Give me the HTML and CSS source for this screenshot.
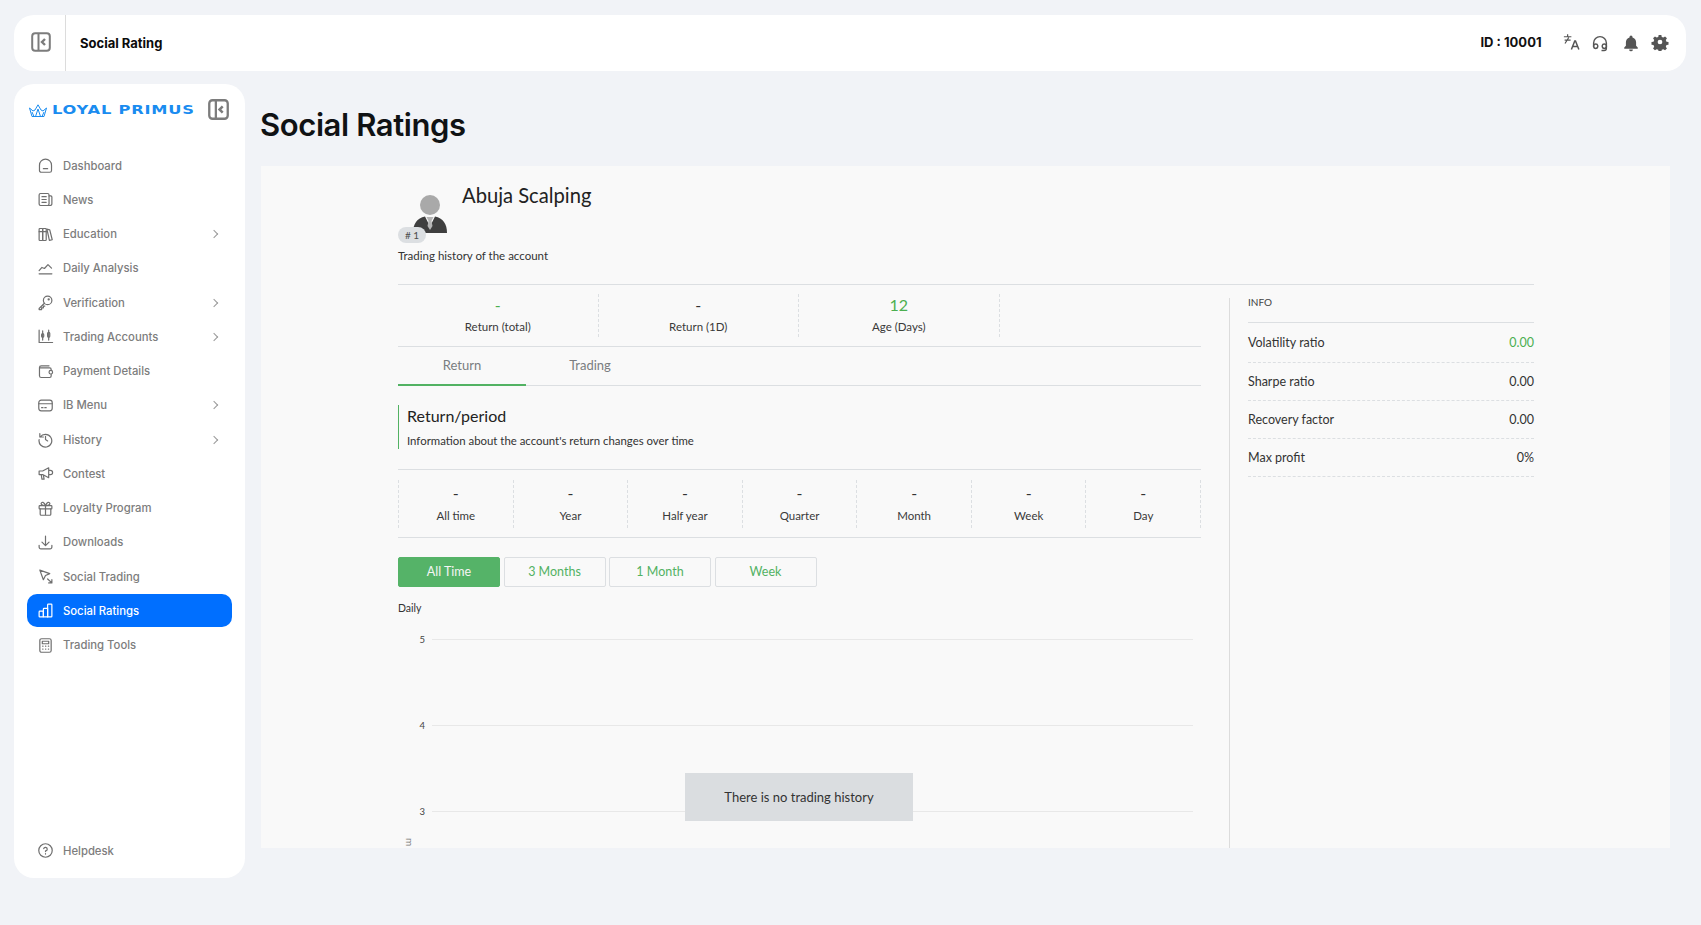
FILE: index.html
```html
<!DOCTYPE html>
<html lang="en">
<head>
<meta charset="utf-8">
<title>Social Ratings</title>
<link rel="stylesheet" href="styles.css">
</head>
<body>
<div class="app">
  <header class="topbar">
    <div class="topbar-toggle">
      <svg class="toggle-icon" viewBox="0 0 20 20"><rect x="1.200" y="1.200" width="17.600" height="17.600" rx="3"/><path d="M7.500 1v18"/><path class="thick" d="M14 7l-3 3 3 3"/></svg>
    </div>
    <div class="topbar-title">Social Rating</div>
    <div class="topbar-id">ID : 10001</div>
    <div class="topbar-icons">
      <svg class="ti" viewBox="0 0 24 24"><path d="M2.500 5h10M7.500 1.500v3.500M3.500 9.500h8M9 6l-5 8"/><path class="heavy" d="M12.500 22l4.500-11.500h1L22.500 22M14.200 18h6.600"/></svg>
      <svg class="ti ti-head" viewBox="0 0 24 24"><path d="M3.500 17v-5a8.500 8.500 0 0 1 17 0v5"/><path d="M3.500 15.500a2.800 2.800 0 0 1 5.500 0v1.500a2.800 2.800 0 0 1-5.500 0zM20.500 15.500a2.800 2.800 0 0 0-5.500 0v1.500a2.800 2.800 0 0 0 5.500 0z"/><path d="M20.500 17v2a3 3 0 0 1-3 3h-3.500"/></svg>
      <svg class="ti ti-bell" viewBox="0 0 24 24"><path class="solid" d="M12 2a2 2 0 0 1 2 2v.500c3 .9 4.800 3.500 4.800 6.500v4.500L21 18v1.500H3V18l2.200-2.500V11c0-3 1.800-5.600 4.800-6.500V4a2 2 0 0 1 2-2zM9.500 20.500h5a2.500 2.500 0 0 1-5 0z"/></svg>
      <svg class="ti ti-gear" viewBox="0 0 24 24"><path class="solid" fill-rule="evenodd" d="M10 1.500h4l.6 3 2.300 1 2.600-1.700 2.800 2.800-1.700 2.600 1 2.300 3 .5v4l-3 .6-1 2.300 1.700 2.600-2.800 2.800-2.600-1.700-2.300 1-.6 3h-4l-.6-3-2.300-1-2.600 1.700-2.800-2.800 1.700-2.600-1-2.300-3-.6v-4l3-.5 1-2.300L1.700 6.600l2.800-2.800 2.600 1.700 2.300-1zM12 8.500a3.500 3.500 0 1 0 0 7 3.500 3.500 0 0 0 0-7z" transform="translate(1.200 1.200) scale(.9)"/></svg>
    </div>
  </header>

  <div class="layout">
    <aside class="sidebar">
      <div class="brand">
        <svg class="crown" viewBox="0 0 18 13"><path d="M.5 4l2.500 8.500h12L17.500 4l-3.500 3-2-1L9 .8 6 6 4 7zM9 5l-2.500 7.500h5zM3 8l2 4.500M15 8l-2 4.500"/></svg>
        <span class="brand-name">LOYAL PRIMUS</span>
        <svg class="toggle-icon side-toggle" viewBox="0 0 20 20"><rect x="1.200" y="1.200" width="17.600" height="17.600" rx="3"/><path d="M7.500 1v18"/><path class="thick" d="M14 7l-3 3 3 3"/></svg>
      </div>
      <nav class="nav">
        <a class="nav-item"><svg viewBox="0 0 24 24"><path d="M3.500 11.500a8.500 8.500 0 0 1 17 0V19a2.500 2.500 0 0 1-2.500 2.500H6A2.500 2.500 0 0 1 3.500 19zM9 16.500h6"/></svg><span>Dashboard</span></a>
        <a class="nav-item"><svg viewBox="0 0 24 24"><rect x="3" y="3.500" width="14" height="17" rx="2"/><path d="M17 7h2.500A1.500 1.500 0 0 1 21 8.500V18a2.500 2.500 0 0 1-2.500 2.500H15M7 8h6M7 12h6M7 16h6"/></svg><span>News</span></a>
        <a class="nav-item"><svg viewBox="0 0 24 24"><rect x="3" y="3.500" width="5" height="17" rx="1"/><rect x="8" y="3.500" width="5" height="17" rx="1"/><path d="M3 8h10M14 4.500l4 .9 3.500 14-4 1z"/></svg><span>Education</span><i class="chev"></i></a>
        <a class="nav-item"><svg viewBox="0 0 24 24"><path d="M3 15l4-4.500 3.500 1.500 5-5.500 5 5M3 19.500h18"/></svg><span>Daily Analysis</span></a>
        <a class="nav-item"><svg viewBox="0 0 24 24"><circle cx="15" cy="9" r="6"/><path d="M10.500 13L3 20.500V22h3.500v-2.500H9V17h2"/><circle cx="16.500" cy="7.500" r=".8"/></svg><span>Verification</span><i class="chev"></i></a>
        <a class="nav-item"><svg viewBox="0 0 24 24"><path d="M3 3v17.500h19M8 4v13M16.500 3v14"/><rect x="6.500" y="8" width="3" height="5" rx="1.500"/><rect x="15" y="6" width="3" height="7" rx="1.500"/></svg><span>Trading Accounts</span><i class="chev"></i></a>
        <a class="nav-item"><svg viewBox="0 0 24 24"><path d="M17 4H6a2.500 2.500 0 0 0-2.500 2.500V18A2.500 2.500 0 0 0 6 20.500h12a2 2 0 0 0 2-2V16M3.500 7H18a2 2 0 0 1 2 2v1.500"/><circle cx="19.500" cy="13" r="2.500"/></svg><span>Payment Details</span></a>
        <a class="nav-item"><svg viewBox="0 0 24 24"><rect x="2.500" y="4.500" width="19" height="15" rx="3.500"/><path d="M2.500 9.500h19M6.500 15h2M11 15h2"/></svg><span>IB Menu</span><i class="chev"></i></a>
        <a class="nav-item"><svg viewBox="0 0 24 24"><path d="M4.500 8.500A9 9 0 1 1 3 12M4 3.500v5h5M12 7.500V12l3 2"/></svg><span>History</span><i class="chev"></i></a>
        <a class="nav-item"><svg viewBox="0 0 24 24"><path d="M3 8.500h5L16.500 4v14L8 13.500H3zM16.500 7.500h2.500a3 3 0 0 1 0 6h-2.500M6 13.500l1 6.500h3l-1-6"/></svg><span>Contest</span></a>
        <a class="nav-item"><svg viewBox="0 0 24 24"><rect x="3" y="8" width="18" height="4.500" rx="1"/><path d="M4.500 12.500V20a1.500 1.500 0 0 0 1.500 1.500h12a1.500 1.500 0 0 0 1.500-1.500v-7.500M12 8v13.500M12 8c-5.500 0-6.500-2-6-3.500C6.700 2.500 10 2.500 12 8zM12 8c5.500 0 6.500-2 6-3.500-.7-2-4-2-6 3.500z"/></svg><span>Loyalty Program</span></a>
        <a class="nav-item"><svg viewBox="0 0 24 24"><path d="M12 3v13M7 11.500l5 5 5-5M3 16v2.500A2.500 2.500 0 0 0 5.500 21h13a2.500 2.500 0 0 0 2.500-2.500V16"/></svg><span>Downloads</span></a>
        <a class="nav-item"><svg viewBox="0 0 24 24"><path d="M4 3l14 5-6 2.500-3 6zM15 15.500l6 5.500M21 16.500V21h-4.500"/></svg><span>Social Trading</span></a>
        <a class="nav-item active"><svg viewBox="0 0 24 24"><rect x="3" y="13" width="6" height="8" rx="1"/><path d="M9 21V10a1 1 0 0 1 1-1h5v12z"/><path d="M15 21V4a1 1 0 0 1 1-1h4a1 1 0 0 1 1 1v16a1 1 0 0 1-1 1z"/></svg><span>Social Ratings</span></a>
        <a class="nav-item"><svg viewBox="0 0 24 24"><rect x="4" y="2.500" width="16" height="19" rx="2.500"/><rect x="7.500" y="6" width="9" height="3.500"/><path d="M8 13h.5M12 13h.5M16 13h.5M8 17h.5M12 17h.5M16 17h.5"/></svg><span>Trading Tools</span></a>
      </nav>
      <a class="nav-item helpdesk"><svg viewBox="0 0 24 24"><circle cx="12" cy="12" r="9.500"/><path d="M9.500 9.500A2.500 2.500 0 1 1 12 12.500v1M12 16.500v.5"/></svg><span>Helpdesk</span></a>
    </aside>

    <main class="main">
      <h1 class="page-title">Social Ratings</h1>
      <section class="panel">
        <div class="panel-inner">
          <div class="profile">
            <div class="avatar">
              <svg class="avatar-img" viewBox="0 0 34 38"><circle cx="17" cy="10" r="10" fill="#a9a9a9"/><path d="M0 38c0-9 4-15 12-16.500l4 8h2l4-8c8 1.500 12 7.500 12 16.500z" fill="#3f3f3f"/><path d="M13.500 22h7l-2 4 1 5-2.500 4-2.500-4 1-5z" fill="#b5b5b5"/></svg>
              <span class="badge"># 1</span>
            </div>
            <div class="name">Abuja Scalping</div>
          </div>
          <p class="subtitle">Trading history of the account</p>
          <div class="columns">
            <div class="col-main">
              <div class="stats">
                <div class="stat"><b class="green">-</b><span>Return (total)</span></div>
                <div class="stat"><b>-</b><span>Return (1D)</span></div>
                <div class="stat"><b class="green">12</b><span>Age (Days)</span></div>
              </div>
              <div class="tabs">
                <a class="tab tab-active">Return</a>
                <a class="tab">Trading</a>
              </div>
              <div class="section-head">
                <h2>Return/period</h2>
                <p>Information about the account's return changes over time</p>
              </div>
              <div class="periods">
                <div class="period"><b>-</b><span>All time</span></div>
                <div class="period"><b>-</b><span>Year</span></div>
                <div class="period"><b>-</b><span>Half year</span></div>
                <div class="period"><b>-</b><span>Quarter</span></div>
                <div class="period"><b>-</b><span>Month</span></div>
                <div class="period"><b>-</b><span>Week</span></div>
                <div class="period"><b>-</b><span>Day</span></div>
              </div>
              <div class="ranges">
                <button class="range range-on">All Time</button>
                <button class="range">3 Months</button>
                <button class="range">1 Month</button>
                <button class="range">Week</button>
              </div>
              <div class="chart-label">Daily</div>
              <div class="chart">
                <div class="grid-row"><span>5</span><i></i></div>
                <div class="grid-row"><span>4</span><i></i></div>
                <div class="grid-row"><span>3</span><i></i></div>
                <span class="axis-label">m</span>
                <div class="no-history">There is no trading history</div>
              </div>
            </div>
            <aside class="info">
              <div class="info-title">INFO</div>
              <div class="info-row"><span>Volatility ratio</span><span class="green">0.00</span></div>
              <div class="info-row"><span>Sharpe ratio</span><span>0.00</span></div>
              <div class="info-row"><span>Recovery factor</span><span>0.00</span></div>
              <div class="info-row"><span>Max profit</span><span>0%</span></div>
            </aside>
          </div>
        </div>
      </section>
    </main>
  </div>
</div>
</body>
</html>
```
FILE: styles.css
```css
* { box-sizing: border-box; }
html, body { margin: 0; height: 100%; }
body { background: #f1f3f7; font-family: Lato, "Noto Sans", sans-serif; color: #2b2f33; overflow: hidden; }
.app { padding: 15px 15px 0 14px; height: 925px; }
p, h1, h2 { margin: 0; font-weight: 400; }

.topbar { height: 56px; background: #fff; border-radius: 20px; display: flex; align-items: center; font-family: Inter, sans-serif; }
.topbar-toggle { width: 52px; height: 56px; border-right: 1px solid #dcdcdc; display: flex; align-items: center; justify-content: center; padding: 0 0 2px 2px; }
.topbar-title { margin: -1px 0 0 14px; font-size: 13px; font-weight: 700; color: #0b0b0b; flex: 1; }
.topbar-id { font-size: 13px; font-weight: 700; color: #111; margin-right: 20px; margin-top: -3px; }
.topbar-icons { display: flex; align-items: center; gap: 11.5px; margin-right: 17px; margin-top: -2px; }
.ti { width: 18px; height: 18px; fill: none; stroke: #555; stroke-width: 1.6; }
.ti .solid { fill: #555; stroke: none; }
.ti .heavy { stroke-width: 2; }
.ti-head { stroke: #555; stroke-width: 1.9; margin-top: 2px; }
.ti-bell { margin-left: 1px; margin-top: 2px; }

.toggle-icon { width: 20px; height: 20px; fill: none; stroke: #7c7c7c; stroke-width: 2; }
.toggle-icon .thick { stroke-width: 2.4; }

.layout { display: flex; margin-top: 13px; }
.sidebar { width: 231px; height: 794px; background: #fff; border-radius: 20px; flex: none; display: flex; flex-direction: column; font-family: Inter, sans-serif; }
.brand { display: flex; align-items: center; height: 22px; margin: 15px 0 0 15px; }
.crown { width: 18px; height: 13px; fill: none; stroke: #1a8cf0; stroke-width: 1; flex: none; }
.brand-name { font-family: "DejaVu Sans", sans-serif; font-weight: 700; font-size: 12.500px; letter-spacing: .6px; color: #1a8cf0; margin-left: 5px; transform: scaleX(1.3); transform-origin: left center; width: 118px; white-space: nowrap; line-height: 1; }
.side-toggle { width: 21px; height: 21px; margin-left: 38px; margin-top: -2px; stroke-width: 2.200; }

.nav { display: flex; flex-direction: column; gap: 1.250px; margin: 28px 13px 0; flex: 1; }
.nav-item { height: 33px; display: flex; align-items: center; border-radius: 10px; padding-left: 10px; font-size: 11.3px; font-weight: 500; color: #7d7d7d; position: relative; flex: none; }
.nav-item svg { width: 17px; height: 17px; fill: none; stroke: #6f6f6f; stroke-width: 1.7; stroke-linecap: round; stroke-linejoin: round; flex: none; margin-right: 9px; }
.nav-item.active { background: #006fff; color: #fff; }
.nav-item.active svg { stroke: #fff; }
.chev { width: 6px; height: 6px; border-top: 1px solid #999; border-right: 1px solid #999; transform: rotate(45deg); margin-left: auto; margin-right: 15px; }
.helpdesk { margin: 0 13px 11px; }

.main { margin-left: 16px; width: 1409px; flex: none; }
.page-title { font-family: Inter, sans-serif; font-size: 31px; font-weight: 600; color: #101214; letter-spacing: -.4px; line-height: 40px; margin-left: -1px; margin-top: 21px; height: 61px; }
.panel { background: #f9f9f9; height: 682px; overflow: hidden; padding: 0 136px 0 137px; }
.panel-inner { width: 1136px; }

.profile { display: flex; height: 72px; position: relative; padding-top: 19px; }
.avatar { width: 64px; position: relative; flex: none; }
.avatar-img { width: 34px; height: 38px; position: absolute; left: 15px; top: 10px; }
.badge { position: absolute; left: 0; top: 42px; width: 28px; height: 16px; border-radius: 9px; background: #dcdfe2; color: #4d4d4d; font-size: 10px; text-align: center; line-height: 16px; }
.name { font-size: 20.200px; line-height: 24px; color: #222; margin-top: -2px; }
.subtitle { font-size: 11.500px; line-height: 16px; color: #333; margin-top: 10px; }

.columns { display: flex; border-top: 1px solid #dcdfe2; margin-top: 20px; }
.col-main { width: 803px; flex: none; }
.stats { display: flex; height: 62px; padding: 9px 0; border-bottom: 1px solid #dcdfe2; }
.stat { width: 200.500px; border-right: 1px dashed #dcdfe2; display: flex; flex-direction: column; align-items: center; }
.stat b, .period b { font-weight: 400; font-size: 16px; line-height: 22px; height: 22px; color: #333; }
.stat span, .period span { font-size: 11.500px; line-height: 17px; color: #3a3a3a; margin-top: 2px; }
.green { color: #4caf50 !important; }

.tabs { display: flex; height: 39px; border-bottom: 1px solid #dcdfe2; }
.tab { width: 128px; text-align: center; font-size: 13px; line-height: 37px; color: #7a7d80; }
.tab-active { border-bottom: 2px solid #52b263; height: 39px; }

.section-head { margin-top: 19px; border-left: 1px solid #52b263; padding-left: 8px; height: 44px; }
.section-head h2 { font-size: 16px; line-height: 22px; color: #222; }
.section-head p { font-size: 11.400px; line-height: 16px; color: #333; margin-top: 6px; }

.periods { display: flex; margin-top: 20px; height: 69px; padding: 10px 0 9px; border-top: 1px solid #dcdfe2; border-bottom: 1px solid #dcdfe2; }
.period { flex: 1; border-left: 1px dashed #dcdfe2; display: flex; flex-direction: column; align-items: center; padding-top: 2px; }
.period span { margin-top: 3px; }
.period:last-child { border-right: 1px dashed #dcdfe2; }

.ranges { display: flex; gap: 3.500px; margin-top: 19px; }
.range { width: 102px; height: 30px; border: 1px solid #dcdfe2; border-radius: 2px; background: transparent; color: #52b263; font: 12.500px Lato, sans-serif; padding: 0 0 2px; }
.range-on { background: #55b368; border-color: #55b368; color: #f5f5f5; }

.chart-label { font-size: 10.500px; line-height: 14px; margin-top: 14px; color: #333; }
.chart { position: relative; margin-top: 24px; height: 260px; }
.grid-row { display: flex; align-items: flex-start; height: 86px; }
.grid-row span { width: 28px; text-align: right; font-size: 9.500px; padding-right: 1px; color: #444; height: 12px; line-height: 12px; margin-top: -5px; }
.grid-row i { display: block; margin-left: 6px; width: 761px; border-top: 1px solid #e8e8e8; }
.axis-label { position: absolute; left: 7px; top: 199px; font-size: 10px; line-height: 9px; color: #777; writing-mode: vertical-rl; }
.no-history { position: absolute; left: 287px; top: 134px; width: 228px; height: 48px; background: #dadde0; color: #333; font-size: 13px; display: flex; align-items: center; justify-content: center; }

.info { width: 305px; flex: none; margin-top: 13px; border-left: 1px solid #dcdcdc; margin-left: 28px; padding-left: 18px; height: 600px; }
.info-title { font-size: 10px; line-height: 14px; color: #444; height: 28px; margin-top: -3px; border-bottom: 1px solid #dcdfe2; }
.info-row { display: flex; justify-content: space-between; align-items: center; height: 38px; border-bottom: 1px dashed #dcdfe2; font-size: 12.500px; color: #333; }
.info-title + .info-row { height: 40px; }
```
